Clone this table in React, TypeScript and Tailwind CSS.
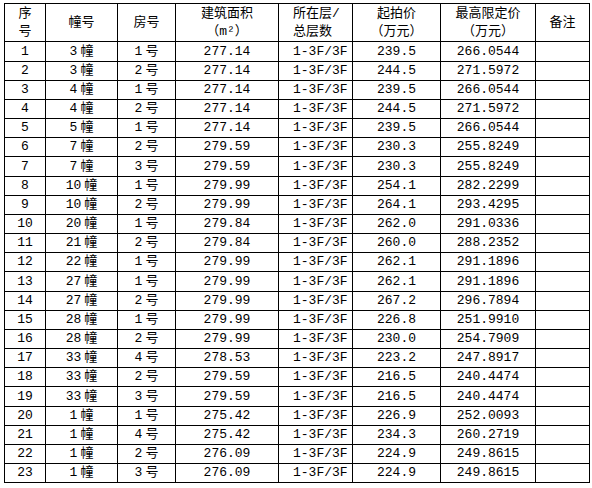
const rows = [
  ['1', '3', '1', '277.14', '239.5', '266.0544'],
  ['2', '3', '2', '277.14', '244.5', '271.5972'],
  ['3', '4', '1', '277.14', '239.5', '266.0544'],
  ['4', '4', '2', '277.14', '244.5', '271.5972'],
  ['5', '5', '1', '277.14', '239.5', '266.0544'],
  ['6', '7', '2', '279.59', '230.3', '255.8249'],
  ['7', '7', '3', '279.59', '230.3', '255.8249'],
  ['8', '10', '1', '279.99', '254.1', '282.2299'],
  ['9', '10', '2', '279.99', '264.1', '293.4295'],
  ['10', '20', '1', '279.84', '262.0', '291.0336'],
  ['11', '21', '2', '279.84', '260.0', '288.2352'],
  ['12', '22', '1', '279.99', '262.1', '291.1896'],
  ['13', '27', '1', '279.99', '262.1', '291.1896'],
  ['14', '27', '2', '279.99', '267.2', '296.7894'],
  ['15', '28', '1', '279.99', '226.8', '251.9910'],
  ['16', '28', '2', '279.99', '230.0', '254.7909'],
  ['17', '33', '4', '278.53', '223.2', '247.8917'],
  ['18', '33', '2', '279.59', '216.5', '240.4474'],
  ['19', '33', '3', '279.59', '216.5', '240.4474'],
  ['20', '1', '1', '275.42', '226.9', '252.0093'],
  ['21', '1', '4', '275.42', '234.3', '260.2719'],
  ['22', '1', '2', '276.09', '224.9', '249.8615'],
  ['23', '1', '3', '276.09', '224.9', '249.8615'],
];

// a few rows are one pixel taller so the bottom border lands where it should
const tallRows = [0, 6, 12, 18];

const cell = 'border border-black p-0 leading-[18px] whitespace-nowrap';

export default function App() {
  return (
    <div className="w-[592px] h-[488px] bg-white pl-[4px] pt-[3px]">
      <table
        className="table-fixed border-collapse w-[585px] text-black text-[13px]"
        style={{ fontFamily: '"Liberation Mono", "Noto Sans CJK SC", monospace' }}
      >
        <colgroup>
          <col className="w-[41px]" />
          <col className="w-[72px]" />
          <col className="w-[58px]" />
          <col className="w-[103px]" />
          <col className="w-[74px]" />
          <col className="w-[88px]" />
          <col className="w-[95px]" />
          <col className="w-[54px]" />
        </colgroup>
        <thead>
          <tr className="h-[38px]">
            <th className={`${cell} font-normal text-center`}>
              序<br />号
            </th>
            <th className={`${cell} font-normal text-center`}>幢号</th>
            <th className={`${cell} font-normal text-center`}>房号</th>
            <th className={`${cell} font-normal text-center`}>
              建筑面积<br />（m²）
            </th>
            <th className={`${cell} font-normal text-left pl-[14px]`}>
              所在层/<br />总层数
            </th>
            <th className={`${cell} font-normal text-center`}>
              起拍价<br />（万元）
            </th>
            <th className={`${cell} font-normal text-center`}>
              最高限定价<br />（万元）
            </th>
            <th className={`${cell} font-normal text-center`}>备注</th>
          </tr>
        </thead>
        <tbody>
          {rows.map((r, i) => (
            <tr key={i} className={tallRows.includes(i) ? 'h-[20px]' : 'h-[19px]'}>
              <td className={`${cell} text-center`}>{r[0]}</td>
              <td className={`${cell} text-center`}>
                {r[1]}
                <span className="ml-[3px]">幢</span>
              </td>
              <td className={`${cell} text-center`}>
                {r[2]}
                <span className="ml-[3px]">号</span>
              </td>
              <td className={`${cell} text-center`}>{r[3]}</td>
              <td className={`${cell} text-left pl-[14px]`}>1-3F/3F</td>
              <td className={`${cell} text-center`}>{r[4]}</td>
              <td className={`${cell} text-center`}>{r[5]}</td>
              <td className={cell}></td>
            </tr>
          ))}
        </tbody>
      </table>
    </div>
  );
}
